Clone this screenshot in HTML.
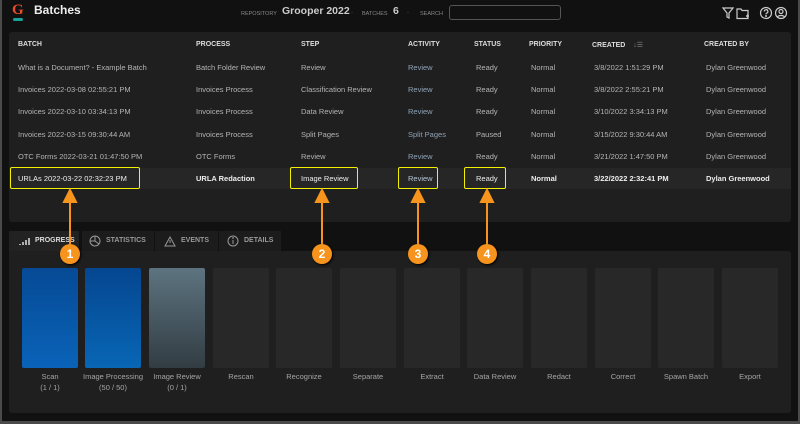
<!DOCTYPE html>
<html><head><style>
*{margin:0;padding:0;box-sizing:border-box}
body{width:800px;height:424px;background:#4a4a4a;font-family:"Liberation Sans",sans-serif;overflow:hidden;position:relative}
#app{position:absolute;left:2px;top:0;width:796px;height:421px;background:#111}
.a{position:absolute;white-space:nowrap}
.t{font-size:7.5px;color:#b4b4b4}
.h{font-size:7px;color:#ddd;font-weight:bold}
.bar{position:absolute;top:268px;width:56px;height:100px;border-radius:2px;background:#282828}
.lb{position:absolute;top:371px;width:64px;text-align:center;font-size:7.5px;color:#a5a5a5;line-height:11px}
.yb{position:absolute;border:1.5px solid #f2f200;border-radius:2px}
.circ{position:absolute;width:20px;height:20px;border-radius:50%;background:#f7941d;color:#fff;font-weight:bold;font-size:12px;text-align:center;line-height:20px;box-shadow:1px 1px 2px #000}
.tab{position:absolute;top:231px;height:20px;background:#1c1c1c;font-size:7px;font-weight:bold;color:#999;line-height:20px}
</style></head><body>
<div id="app">
<div class="a" style="left:10px;top:2px;font-size:15px;color:#e84d2a;font-family:'Liberation Serif',serif;font-weight:bold">G</div>
<div class="a" style="left:11px;top:18px;width:10px;height:3px;background:#1aa39a;border-radius:2px"></div>
<div class="a" style="left:32px;top:3px;font-size:12px;color:#eee;font-weight:bold">Batches</div>
<div class="a" style="left:239px;top:11px;font-size:5.5px;color:#888">REPOSITORY</div>
<div class="a" style="left:280px;top:5px;font-size:10.5px;color:#ccc;font-weight:bold">Grooper 2022</div>
<div class="a" style="left:349px;top:10px;font-size:6px;color:#888">·</div>
<div class="a" style="left:360px;top:11px;font-size:5.5px;color:#888">BATCHES</div>
<div class="a" style="left:391px;top:5px;font-size:10.5px;color:#ccc;font-weight:bold">6</div>
<div class="a" style="left:405px;top:10px;font-size:6px;color:#888">·</div>
<div class="a" style="left:418px;top:11px;font-size:5.5px;color:#888">SEARCH</div>
<div class="a" style="left:447px;top:5px;width:112px;height:15px;border:1px solid #555;border-radius:3px"></div>
<svg class="a" style="left:718px;top:5px" width="80" height="16" viewBox="0 0 80 16" fill="none" stroke="#ccc" stroke-width="1.2">
<path d="M3 3h10l-4 5v5l-2-1V8z"/>
<path d="M17 4h4l1 1.5h6v8h-11z"/><path d="M26 11h3M27.5 9.5v3"/>
<circle cx="46" cy="8" r="5.5"/><path d="M44.3 6.5a1.8 1.8 0 1 1 2.3 1.7c-.5.2-.6.6-.6 1.2"/><circle cx="46" cy="11" r=".4" fill="#ccc"/>
<circle cx="61" cy="8" r="5.5"/><circle cx="61" cy="6.5" r="2"/><path d="M57.5 12c1-2 6-2 7 0"/>
</svg>

<div class="a" style="left:7px;top:32px;width:782px;height:190px;background:#1f1f1f;border-radius:3px"></div>
<div class="a" style="left:7px;top:168px;width:782px;height:21px;background:#262626"></div>
<div class="a h" style="left:16px;top:41px">BATCH</div>
<div class="a h" style="left:194px;top:41px">PROCESS</div>
<div class="a h" style="left:299px;top:41px">STEP</div>
<div class="a h" style="left:406px;top:41px">ACTIVITY</div>
<div class="a h" style="left:472px;top:41px">STATUS</div>
<div class="a h" style="left:527px;top:41px">PRIORITY</div>
<div class="a h" style="left:590px;top:41px">CREATED <span style="color:#888;font-weight:normal;margin-left:6px">↓☰</span></div>
<div class="a h" style="left:702px;top:41px">CREATED BY</div>

<div class="a t" style="left:16px;top:63px">What is a Document? - Example Batch</div>
<div class="a t" style="left:194px;top:63px">Batch Folder Review</div>
<div class="a t" style="left:299px;top:63px">Review</div>
<div class="a t" style="left:406px;top:63px;color:#8fa3b5">Review</div>
<div class="a t" style="left:474px;top:63px">Ready</div>
<div class="a t" style="left:529px;top:63px">Normal</div>
<div class="a t" style="left:592px;top:63px">3/8/2022 1:51:29 PM</div>
<div class="a t" style="left:704px;top:63px">Dylan Greenwood</div>

<div class="a t" style="left:16px;top:85px">Invoices 2022-03-08 02:55:21 PM</div>
<div class="a t" style="left:194px;top:85px">Invoices Process</div>
<div class="a t" style="left:299px;top:85px">Classification Review</div>
<div class="a t" style="left:406px;top:85px;color:#8fa3b5">Review</div>
<div class="a t" style="left:474px;top:85px">Ready</div>
<div class="a t" style="left:529px;top:85px">Normal</div>
<div class="a t" style="left:592px;top:85px">3/8/2022 2:55:21 PM</div>
<div class="a t" style="left:704px;top:85px">Dylan Greenwood</div>

<div class="a t" style="left:16px;top:107px">Invoices 2022-03-10 03:34:13 PM</div>
<div class="a t" style="left:194px;top:107px">Invoices Process</div>
<div class="a t" style="left:299px;top:107px">Data Review</div>
<div class="a t" style="left:406px;top:107px;color:#8fa3b5">Review</div>
<div class="a t" style="left:474px;top:107px">Ready</div>
<div class="a t" style="left:529px;top:107px">Normal</div>
<div class="a t" style="left:592px;top:107px">3/10/2022 3:34:13 PM</div>
<div class="a t" style="left:704px;top:107px">Dylan Greenwood</div>

<div class="a t" style="left:16px;top:130px">Invoices 2022-03-15 09:30:44 AM</div>
<div class="a t" style="left:194px;top:130px">Invoices Process</div>
<div class="a t" style="left:299px;top:130px">Split Pages</div>
<div class="a t" style="left:406px;top:130px;color:#8fa3b5">Split Pages</div>
<div class="a t" style="left:474px;top:130px">Paused</div>
<div class="a t" style="left:529px;top:130px">Normal</div>
<div class="a t" style="left:592px;top:130px">3/15/2022 9:30:44 AM</div>
<div class="a t" style="left:704px;top:130px">Dylan Greenwood</div>

<div class="a t" style="left:16px;top:152px">OTC Forms 2022-03-21 01:47:50 PM</div>
<div class="a t" style="left:194px;top:152px">OTC Forms</div>
<div class="a t" style="left:299px;top:152px">Review</div>
<div class="a t" style="left:406px;top:152px;color:#8fa3b5">Review</div>
<div class="a t" style="left:474px;top:152px">Ready</div>
<div class="a t" style="left:529px;top:152px">Normal</div>
<div class="a t" style="left:592px;top:152px">3/21/2022 1:47:50 PM</div>
<div class="a t" style="left:704px;top:152px">Dylan Greenwood</div>

<div class="a t" style="left:16px;top:174px;color:#eee">URLAs 2022-03-22 02:32:23 PM</div>
<div class="a t" style="left:194px;top:174px;color:#eee;font-weight:bold">URLA Redaction</div>
<div class="a t" style="left:299px;top:174px;color:#eee">Image Review</div>
<div class="a t" style="left:406px;top:174px;color:#b5c5d5">Review</div>
<div class="a t" style="left:474px;top:174px;color:#eee">Ready</div>
<div class="a t" style="left:529px;top:174px;color:#eee;font-weight:bold">Normal</div>
<div class="a t" style="left:592px;top:174px;color:#eee;font-weight:bold">3/22/2022 2:32:41 PM</div>
<div class="a t" style="left:704px;top:174px;color:#eee;font-weight:bold">Dylan Greenwood</div>

<div class="tab" style="left:7px;width:70px;background:#222;color:#ddd;padding-left:26px">PROGRESS</div>
<div class="tab" style="left:80px;width:72px;padding-left:24px">STATISTICS</div>
<div class="tab" style="left:153px;width:63px;padding-left:26px">EVENTS</div>
<div class="tab" style="left:217px;width:62px;padding-left:25px">DETAILS</div>
<svg class="a" style="left:0;top:231px" width="290" height="20" fill="none" stroke="#999" stroke-width="1">
<path d="M18 14v-1M21 14v-3M24 14v-5M27 14v-7" stroke="#ddd" stroke-width="1.5"/>
<circle cx="93" cy="10" r="5"/><path d="M93 5v5l4 3M93 10h-5"/>
<path d="M163 15h10l-5-9z"/><path d="M168 9v3"/>
<circle cx="231" cy="10" r="5"/><path d="M231 9v4"/><circle cx="231" cy="7" r=".4"/>
</svg>
<div class="a" style="left:7px;top:251px;width:782px;height:162px;background:#1f1f1f;border-radius:0 3px 3px 3px"></div>

<div class="bar" style="left:20px;background:linear-gradient(#064a95,#0a63b8)"></div>
<div class="bar" style="left:83px;background:linear-gradient(#054690,#0866b5)"></div>
<div class="bar" style="left:147px;background:linear-gradient(#5d7480,#323c43)"></div>
<div class="bar" style="left:211px"></div><div class="bar" style="left:274px"></div><div class="bar" style="left:338px"></div>
<div class="bar" style="left:402px"></div><div class="bar" style="left:465px"></div><div class="bar" style="left:529px"></div>
<div class="bar" style="left:593px"></div><div class="bar" style="left:656px"></div><div class="bar" style="left:720px"></div>
<div class="lb" style="left:16px">Scan<br>(1 / 1)</div>
<div class="lb" style="left:79px">Image Processing<br>(50 / 50)</div>
<div class="lb" style="left:143px">Image Review<br>(0 / 1)</div>
<div class="lb" style="left:207px">Rescan</div>
<div class="lb" style="left:270px">Recognize</div>
<div class="lb" style="left:334px">Separate</div>
<div class="lb" style="left:398px">Extract</div>
<div class="lb" style="left:461px">Data Review</div>
<div class="lb" style="left:525px">Redact</div>
<div class="lb" style="left:589px">Correct</div>
<div class="lb" style="left:652px">Spawn Batch</div>
<div class="lb" style="left:716px">Export</div>

<div class="yb" style="left:8px;top:167px;width:130px;height:22px"></div>
<div class="yb" style="left:288px;top:167px;width:68px;height:22px"></div>
<div class="yb" style="left:396px;top:167px;width:40px;height:22px"></div>
<div class="yb" style="left:462px;top:167px;width:42px;height:22px"></div>
<svg class="a" style="left:0;top:0" width="800" height="424">
<g fill="#f7941d" stroke="#f7941d" stroke-width="2">
<path d="M68 250V200"/><path d="M62 202l6-12 6 12z"/>
<path d="M320 250V200"/><path d="M314 202l6-12 6 12z"/>
<path d="M416 250V200"/><path d="M410 202l6-12 6 12z"/>
<path d="M485 250V200"/><path d="M479 202l6-12 6 12z"/>
</g></svg>
<div class="circ" style="left:58px;top:244px">1</div>
<div class="circ" style="left:310px;top:244px">2</div>
<div class="circ" style="left:406px;top:244px">3</div>
<div class="circ" style="left:475px;top:244px">4</div>
</div>
</body></html>
